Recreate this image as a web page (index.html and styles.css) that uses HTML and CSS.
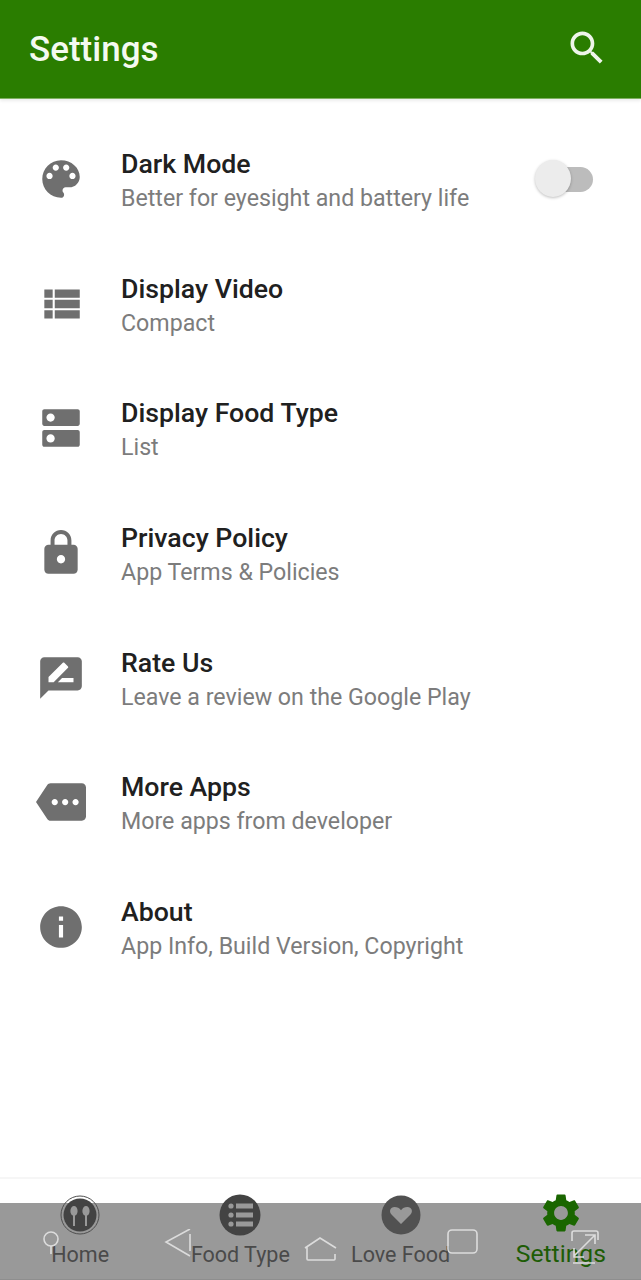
FILE: index.html
```html
<!DOCTYPE html>
<html lang="en">
<head>
<meta charset="utf-8">
<title>Settings</title>
<link rel="stylesheet" href="styles.css">
</head>
<body>
<div class="screen">
  <header class="appbar">
    <h1 class="appbar-title">Settings</h1>
    <svg class="appbar-search" viewBox="0 0 24 24"><path d="M15.5 14h-.79l-.28-.27C15.41 12.59 16 11.11 16 9.5 16 5.91 13.09 3 9.5 3S3 5.91 3 9.5 5.91 16 9.5 16c1.61 0 3.09-.59 4.23-1.57l.27.28v.79l5 4.99L20.49 19l-4.99-5zm-6 0C7.01 14 5 11.99 5 9.5S7.01 5 9.5 5 14 7.01 14 9.5 11.99 14 9.5 14z"/></svg>
  </header>

  <main class="list">
    <div class="row">
      <svg class="row-icon" viewBox="0 0 24 24"><path d="M12 3c-4.97 0-9 4.03-9 9s4.03 9 9 9c.83 0 1.5-.67 1.5-1.5 0-.39-.15-.74-.39-1.01-.23-.26-.38-.61-.38-.99 0-.83.67-1.5 1.5-1.5H16c2.76 0 5-2.24 5-5 0-4.42-4.03-8-9-8zm-5.5 9c-.83 0-1.5-.67-1.5-1.5S5.67 9 6.5 9 8 9.67 8 10.5 7.33 12 6.5 12zm3-4C8.67 8 8 7.33 8 6.5S8.67 5 9.5 5s1.5.67 1.5 1.5S10.33 8 9.5 8zm5 0c-.83 0-1.5-.67-1.5-1.5S13.67 5 14.5 5s1.5.67 1.5 1.5S15.33 8 14.5 8zm3 4c-.83 0-1.5-.67-1.5-1.5S16.67 9 17.5 9s1.5.67 1.5 1.5-.67 1.5-1.5 1.5z"/></svg>
      <div class="row-text">
        <div class="row-title">Dark Mode</div>
        <div class="row-sub">Better for eyesight and battery life</div>
      </div>
      <div class="toggle"><span class="toggle-track"></span><span class="toggle-thumb"></span></div>
    </div>
    <div class="row">
      <svg class="row-icon" viewBox="0 0 24 24"><path d="M4 14h4v-4H4v4zm0 5h4v-4H4v4zM4 9h4V5H4v4zm5 5h12v-4H9v4zm0 5h12v-4H9v4zM9 5v4h12V5H9z"/></svg>
      <div class="row-text">
        <div class="row-title">Display Video</div>
        <div class="row-sub">Compact</div>
      </div>
    </div>
    <div class="row">
      <svg class="row-icon" viewBox="0 0 24 24"><path d="M20 13H4c-.55 0-1 .45-1 1v6c0 .55.45 1 1 1h16c.55 0 1-.45 1-1v-6c0-.55-.45-1-1-1zM7 19c-1.1 0-2-.9-2-2s.9-2 2-2 2 .9 2 2-.9 2-2 2zM20 3H4c-.55 0-1 .45-1 1v6c0 .55.45 1 1 1h16c.55 0 1-.45 1-1V4c0-.55-.45-1-1-1zM7 9c-1.1 0-2-.9-2-2s.9-2 2-2 2 .9 2 2-.9 2-2 2z"/></svg>
      <div class="row-text">
        <div class="row-title">Display Food Type</div>
        <div class="row-sub">List</div>
      </div>
    </div>
    <div class="row">
      <svg class="row-icon" viewBox="0 0 24 24"><path d="M18 8h-1V6c0-2.76-2.24-5-5-5S7 3.24 7 6v2H6c-1.1 0-2 .9-2 2v10c0 1.1.9 2 2 2h12c1.1 0 2-.9 2-2V10c0-1.1-.9-2-2-2zm-6 9c-1.1 0-2-.9-2-2s.9-2 2-2 2 .9 2 2-.9 2-2 2zm3.1-9H8.9V6c0-1.71 1.39-3.1 3.1-3.1 1.71 0 3.1 1.39 3.1 3.1v2z"/></svg>
      <div class="row-text">
        <div class="row-title">Privacy Policy</div>
        <div class="row-sub">App Terms &amp; Policies</div>
      </div>
    </div>
    <div class="row">
      <svg class="row-icon" viewBox="0 0 24 24"><path d="M20 2H4c-1.1 0-1.99.9-1.99 2L2 22l4-4h14c1.1 0 2-.9 2-2V4c0-1.1-.9-2-2-2zM6 14v-2.47l6.88-6.88c.2-.2.51-.2.71 0l1.77 1.77c.2.2.2.51 0 .71L8.47 14H6zm12 0h-7.5l2-2H18v2z"/></svg>
      <div class="row-text">
        <div class="row-title">Rate Us</div>
        <div class="row-sub">Leave a review on the Google Play</div>
      </div>
    </div>
    <div class="row">
      <svg class="row-icon" viewBox="0 0 24 24"><path d="M22 3H7c-.69 0-1.23.35-1.59.88L0 12l5.41 8.11c.36.53.9.89 1.59.89h15c1.1 0 2-.9 2-2V5c0-1.1-.9-2-2-2zM9 13.5c-.83 0-1.5-.67-1.5-1.5s.67-1.5 1.5-1.5 1.5.67 1.5 1.5-.67 1.5-1.5 1.5zm5 0c-.83 0-1.5-.67-1.5-1.5s.67-1.5 1.5-1.5 1.5.67 1.5 1.5-.67 1.5-1.5 1.5zm5 0c-.83 0-1.5-.67-1.5-1.5s.67-1.5 1.5-1.5 1.5.67 1.5 1.5-.67 1.5-1.5 1.5z"/></svg>
      <div class="row-text">
        <div class="row-title">More Apps</div>
        <div class="row-sub">More apps from developer</div>
      </div>
    </div>
    <div class="row">
      <svg class="row-icon" viewBox="0 0 24 24"><path d="M12 2C6.48 2 2 6.48 2 12s4.48 10 10 10 10-4.48 10-10S17.52 2 12 2zm1 15h-2v-6h2v6zm0-8h-2V7h2v2z"/></svg>
      <div class="row-text">
        <div class="row-title">About</div>
        <div class="row-sub">App Info, Build Version, Copyright</div>
      </div>
    </div>
  </main>

  <nav class="tabs">
    <div class="tab">
      <svg class="tab-icon" viewBox="0 0 44 44">
        <circle class="ring" cx="22" cy="22" r="19"/>
        <circle class="disc" cx="22" cy="22" r="16.5"/>
        <ellipse class="cut" cx="16" cy="18" rx="3.6" ry="5"/>
        <ellipse class="cut" cx="28" cy="18" rx="3.6" ry="5"/>
        <rect class="cut" x="15" y="20" width="2" height="13"/>
        <rect class="cut" x="27" y="20" width="2" height="13"/>
      </svg>
      <span class="tab-label">Home</span>
    </div>
    <div class="tab">
      <svg class="tab-icon" viewBox="0 0 44 44">
        <circle class="disc" cx="22" cy="22" r="20.5"/>
        <circle class="cut" cx="13" cy="13" r="2.6"/>
        <circle class="cut" cx="13" cy="22" r="2.6"/>
        <circle class="cut" cx="13" cy="31" r="2.6"/>
        <rect class="cut" x="18" y="10.5" width="17" height="5"/>
        <rect class="cut" x="18" y="19.5" width="17" height="5"/>
        <rect class="cut" x="18" y="28.5" width="17" height="5"/>
      </svg>
      <span class="tab-label">Food Type</span>
    </div>
    <div class="tab">
      <svg class="tab-icon" viewBox="0 0 44 44">
        <circle class="disc disc-soft" cx="22" cy="22" r="19.5"/>
        <path class="cut" d="M22 31 12.5 21.500c-3-3.200-1-7.500 3-7.500 2.700 0 5 1.200 6.500 3.200 1.500-2 3.800-3.200 6.500-3.200 4 0 6 4.300 3 7.500z"/>
      </svg>
      <span class="tab-label">Love Food</span>
    </div>
    <div class="tab tab-active">
      <svg class="tab-icon" viewBox="0 0 24 24"><path d="M19.14 12.94c.04-.3.06-.61.06-.94 0-.32-.02-.64-.07-.94l2.03-1.58c.18-.14.23-.41.12-.61l-1.92-3.32c-.12-.22-.37-.29-.59-.22l-2.39.96c-.5-.38-1.03-.7-1.62-.94l-.36-2.54c-.04-.24-.24-.41-.48-.41h-3.84c-.24 0-.43.17-.47.41l-.36 2.54c-.59.24-1.13.57-1.62.94l-2.39-.96c-.22-.08-.47 0-.59.22L2.74 8.87c-.12.21-.08.47.12.61l2.03 1.58c-.05.3-.09.63-.09.94s.02.64.07.94l-2.03 1.58c-.18.14-.23.41-.12.61l1.92 3.32c.12.22.37.29.59.22l2.39-.96c.5.38 1.03.7 1.62.94l.36 2.54c.05.24.24.41.48.41h3.84c.24 0 .44-.17.47-.41l.36-2.54c.59-.24 1.13-.56 1.62-.94l2.39.96c.22.08.47 0 .59-.22l1.92-3.32c.12-.22.07-.47-.12-.61l-2.01-1.58zM12 15.6c-1.98 0-3.6-1.62-3.6-3.6s1.62-3.6 3.6-3.6 3.6 1.62 3.6 3.6-1.62 3.6-3.6 3.6z"/></svg>
      <span class="tab-label">Settings</span>
    </div>
    <svg class="sysnav" viewBox="0 0 641 60">
      <circle cx="51" cy="10" r="7"/>
      <path d="M51 17v8"/>
      <path d="M190 0 166 13 190 27M190 5v17"/>
      <path d="M305 19 320 9 336 19M307 17v13a1 1 0 0 0 1 1h26a1 1 0 0 0 1-1v-5"/>
      <rect x="448" y="1" width="29" height="23" rx="4"/>
      <path d="M572 12V4a2 2 0 0 1 2-2h22a2 2 0 0 1 2 2v7M574 27 595 6M585 6h10v9M574 19v9h10M573 34h22"/>
    </svg>
  </nav>
</div>
</body>
</html>
```
FILE: styles.css
```css
* {
  box-sizing: border-box;
}

html,
body {
  margin: 0;
  padding: 0;
  background: #fff;
}

body {
  font-family: Roboto, "Liberation Sans", sans-serif;
}

.screen {
  width: 641px;
  height: 1280px;
  display: flex;
  flex-direction: column;
  overflow: hidden;
}

.appbar {
  height: 99px;
  flex: none;
  display: flex;
  align-items: center;
  justify-content: space-between;
  padding: 0 32px 0 29px;
  background: #2a7d00;
  border-bottom: 1px solid #7fb060;
  box-shadow: 0 2px 3px rgba(0, 0, 0, 0.08);
}

.appbar-title {
  margin: 0;
  font-size: 35px;
  font-weight: 500;
  color: #f4faf0;
}

.appbar-search {
  width: 44px;
  height: 44px;
  fill: #eef5ea;
  margin-bottom: 2px;
}

.list {
  flex: 1;
  padding-top: 18px;
}

.row {
  height: 124.6px;
  display: flex;
  align-items: center;
  padding-left: 35.5px;
  padding-right: 48px;
}

.row-icon {
  width: 50px;
  height: 50px;
  flex: none;
  fill: #6f6f6f;
}

.row-text {
  flex: 1;
  margin-left: 35.5px;
  padding-top: 5px;
}

.row-title {
  font-size: 26.7px;
  line-height: 31px;
  font-weight: 500;
  color: #202020;
}

.row-sub {
  margin-top: 3px;
  font-size: 23.2px;
  line-height: 31px;
  color: #7c7c7c;
}

.toggle {
  position: relative;
  width: 58px;
  height: 38px;
  flex: none;
  display: flex;
  align-items: center;
  justify-content: flex-end;
}

.toggle-track {
  width: 48px;
  height: 25px;
  border-radius: 13px;
  background: #bcbcbc;
}

.toggle-thumb {
  position: absolute;
  left: 0;
  top: 0;
  width: 36px;
  height: 37px;
  border-radius: 50%;
  background: #ececec;
  box-shadow: 0 1px 3px rgba(0, 0, 0, 0.25);
}

.tabs {
  position: relative;
  flex: none;
  height: 103px;
  display: grid;
  grid-template-columns: repeat(4, 1fr);
  border-top: 2px solid #f6f6f6;
  background: linear-gradient(#fff 24px, #999 24px, #999 100px, #8e8e8e 100px);
}

.tab {
  display: flex;
  flex-direction: column;
  align-items: center;
  padding-top: 14px;
  color: #4a4a4a;
}

.tab-icon {
  width: 44px;
  height: 44px;
  flex: none;
}

.tab-label {
  margin-top: 4px;
  font-size: 21.5px;
  line-height: 28px;
}

.tab-active {
  color: #1d5c05;
  padding-top: 11px;
}

.tab-active .tab-icon {
  width: 46px;
  height: 46px;
  fill: #1a6600;
}

.tab-active .tab-label {
  margin-top: 2px;
  font-size: 24.7px;
  line-height: 31px;
}

.ring {
  fill: none;
  stroke: #4e4e4e;
  stroke-width: 1;
}

.disc {
  fill: #434343;
}

.disc-soft {
  fill: #515151;
}

.cut {
  fill: #999;
}

.sysnav {
  position: absolute;
  left: 0;
  top: 50px;
  width: 641px;
  height: 60px;
  fill: none;
  stroke: #dcdcdc;
  stroke-width: 1.6;
  pointer-events: none;
}
```
